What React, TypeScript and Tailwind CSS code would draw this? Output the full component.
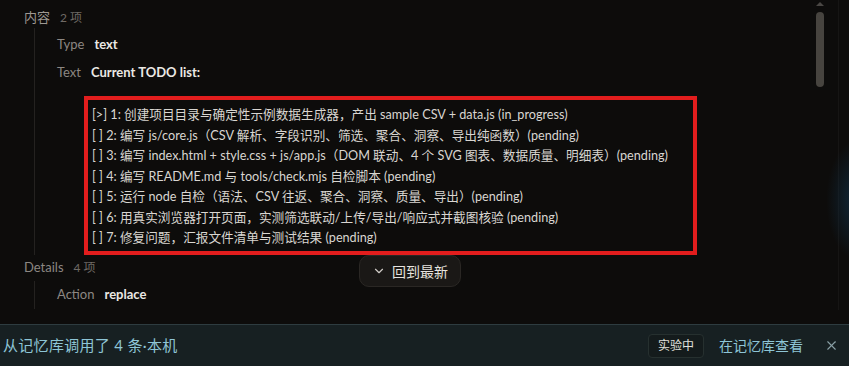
import React from "react";
import { ChevronDown, X } from "lucide-react";

const todos = [
  "[>] 1: 创建项目目录与确定性示例数据生成器，产出 sample CSV + data.js (in_progress)",
  "[ ] 2: 编写 js/core.js（CSV 解析、字段识别、筛选、聚合、洞察、导出纯函数）(pending)",
  "[ ] 3: 编写 index.html + style.css + js/app.js（DOM 联动、4 个 SVG 图表、数据质量、明细表）(pending)",
  "[ ] 4: 编写 README.md 与 tools/check.mjs 自检脚本 (pending)",
  "[ ] 5: 运行 node 自检（语法、CSV 往返、聚合、洞察、质量、导出）(pending)",
  "[ ] 6: 用真实浏览器打开页面，实测筛选联动/上传/导出/响应式并截图核验 (pending)",
  "[ ] 7: 修复问题，汇报文件清单与测试结果 (pending)",
];

const font = {
  fontFamily: '"Lato", "Noto Sans CJK SC", sans-serif',
};

const Row = ({ label, value }: { label: string; value: string }) => (
  <div className="flex items-center gap-[10px] h-[28px]">
    <span className="text-[13px] text-[#8c8782]">{label}</span>
    <span className="text-[13px] font-bold text-[#ebe8e4]">{value}</span>
  </div>
);

export default function App() {
  return (
    <div
      className="relative w-[849px] h-[366px] overflow-hidden bg-[#0d0c0b] flex flex-col"
      style={font}
    >
      {/* scroll area */}
      <div className="relative flex-1 pl-[24px] pt-[8px]">
        <div className="flex items-center gap-[10px] h-[20px]">
          <span className="text-[13px] text-[#9d9892]">内容</span>
          <span className="text-[12px] text-[#6f6a65]">2 项</span>
        </div>
        <div className="ml-[10px] border-l border-[#242220] pl-[22px] pt-[3px]">
          <Row label="Type" value="text" />
          <Row label="Text" value="Current TODO list:" />
          <div className="ml-[27px] mt-[9px] w-[613px] border-[4px] border-[#e21d1d] px-[4px] pt-[5px] pb-[2px]">
            {todos.map((t) => (
              <div key={t} className="text-[12.65px] leading-[20.5px] text-[#d9d6d1] whitespace-nowrap">
                {t}
              </div>
            ))}
          </div>
        </div>
        <div className="flex items-center gap-[10px] h-[26px]">
          <span className="text-[13px] text-[#8c8782]">Details</span>
          <span className="text-[12px] text-[#6f6a65]">4 项</span>
        </div>
        <div className="ml-[10px] border-l border-[#242220] pl-[22px]">
          <Row label="Action" value="replace" />
        </div>

        {/* jump to latest */}
        <button className="absolute left-[359px] top-[255px] h-[32px] w-[102px] flex items-center justify-center gap-[6px] rounded-[10px] border border-[#2a2724] bg-[#1a1816] text-[14px] text-[#e6e3df]">
          <ChevronDown size={14} strokeWidth={2} className="text-[#cfcbc6]" />
          回到最新
        </button>

        {/* scrollbar */}
        <div className="absolute left-[816px] top-[2px] w-0 h-0 border-l-[4px] border-r-[4px] border-b-[4px] border-transparent border-b-[#4a4744]" />
        <div className="absolute left-[816px] top-[12px] w-[8px] h-[75px] rounded-full bg-[#47443f]" />
        <div className="absolute left-[838px] top-0 h-[310px] w-px bg-[#161514]" />
        <div className="absolute left-[826px] top-[140px] h-[120px] w-[30px] bg-[radial-gradient(ellipse_at_right,#12324a_0%,transparent_70%)] opacity-70" />
      </div>

      {/* memory bar */}
      <div className="h-[42px] shrink-0 border-t border-[#2e3c40] bg-[#172022] flex items-center pl-[3px] pr-[10px]">
        <span className="text-[15px] tracking-[0.3px] text-[#8ec5d6]">从记忆库调用了 4 条·本机</span>
        <div className="ml-auto flex items-center">
          <span className="h-[24px] px-[9px] flex items-center rounded-[4px] border border-[#26302f] bg-[#141b1c] text-[12px] text-[#e0e0dd]">
            实验中
          </span>
          <span className="ml-[15px] text-[14px] text-[#8ec5d6]">在记忆库查看</span>
          <X size={15} strokeWidth={1.75} className="ml-[21px] text-[#8aa0a6]" />
        </div>
      </div>
    </div>
  );
}
